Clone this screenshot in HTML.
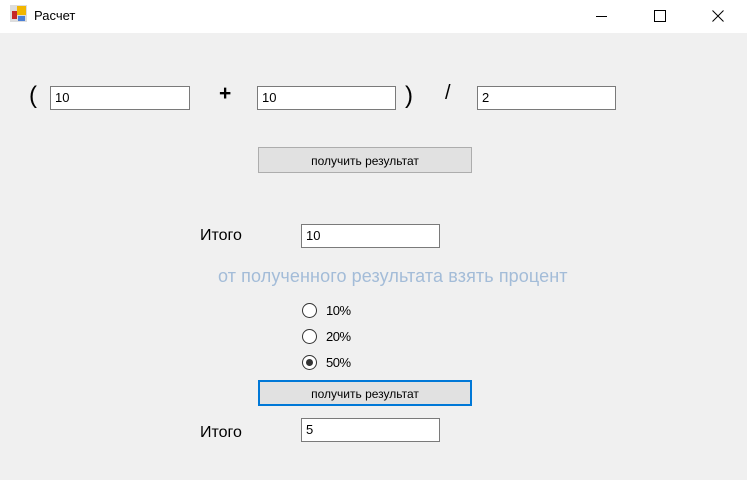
<!DOCTYPE html>
<html><head><meta charset="utf-8"><style>
body{margin:0;width:747px;height:480px;background:#f0f0f0;font-family:"Liberation Sans",sans-serif;position:relative;overflow:hidden}
.a{position:absolute}
.tb{position:absolute;background:#fff;border:1px solid #7a7a7a;box-sizing:border-box;height:24px;font-size:13px;padding:3px 0 0 4px;color:#000}
.btn{position:absolute;background:#e1e1e1;border:1px solid #adadad;box-sizing:border-box;font-size:12px;text-align:center;color:#000}
.r{position:absolute;width:15px;height:15px;border:1px solid #333;border-radius:50%;box-sizing:border-box;background:#fff}
.rl{position:absolute;font-size:13px;color:#000;letter-spacing:-0.5px}
</style></head><body>
<div class="a" style="left:0;top:0;width:747px;height:33px;background:#fff"></div>
<svg class="a" style="left:10px;top:5px" width="18" height="18"><rect x="0" y="0" width="17" height="17" fill="#ddd"/><rect x="7" y="1" width="9" height="9" fill="#f2b600"/><rect x="2" y="6" width="5" height="8" fill="#c62828"/><rect x="8" y="11" width="7" height="5" fill="#4a7fd6"/></svg>
<div class="a" style="left:34px;top:8px;font-size:13px">Расчет</div>
<div class="a" style="left:596px;top:16px;width:11px;height:1px;background:#000"></div>
<div class="a" style="left:654px;top:10px;width:10px;height:10px;border:1px solid #000"></div>
<svg class="a" style="left:712px;top:10px" width="12" height="12"><path d="M0.5 0.5L11.5 11.5M11.5 0.5L0.5 11.5" stroke="#000" stroke-width="1"/></svg>

<div class="a" style="left:29px;top:82px;font-size:24px">(</div>
<div class="tb" style="left:50px;top:86px;width:140px">10</div>
<div class="a" style="left:219px;top:82px;font-size:21px;font-weight:bold">+</div>
<div class="tb" style="left:257px;top:86px;width:139px">10</div>
<div class="a" style="left:405px;top:82px;font-size:24px">)</div>
<div class="a" style="left:445px;top:82px;font-size:20px">/</div>
<div class="tb" style="left:477px;top:86px;width:139px">2</div>

<div class="btn" style="left:258px;top:147px;width:214px;height:26px;padding-top:6px">получить результат</div>

<div class="a" style="left:200px;top:227px;font-size:16px">Итого</div>
<div class="tb" style="left:301px;top:224px;width:139px">10</div>
<div class="a" style="left:218px;top:266px;font-size:18px;color:#a3bcd8;letter-spacing:0.1px">от полученного результата взять процент</div>

<div class="r" style="left:302px;top:303px"></div><div class="rl" style="left:326px;top:303px">10%</div>
<div class="r" style="left:302px;top:329px"></div><div class="rl" style="left:326px;top:329px">20%</div>
<div class="r" style="left:302px;top:355px"><div class="a" style="left:3px;top:3px;width:7px;height:7px;border-radius:50%;background:#333"></div></div><div class="rl" style="left:326px;top:355px">50%</div>

<div class="btn" style="left:258px;top:380px;width:214px;height:26px;border:2px solid #0078d7;padding-top:5px">получить результат</div>
<div class="a" style="left:200px;top:424px;font-size:16px">Итого</div>
<div class="tb" style="left:301px;top:418px;width:139px">5</div>
</body></html>
